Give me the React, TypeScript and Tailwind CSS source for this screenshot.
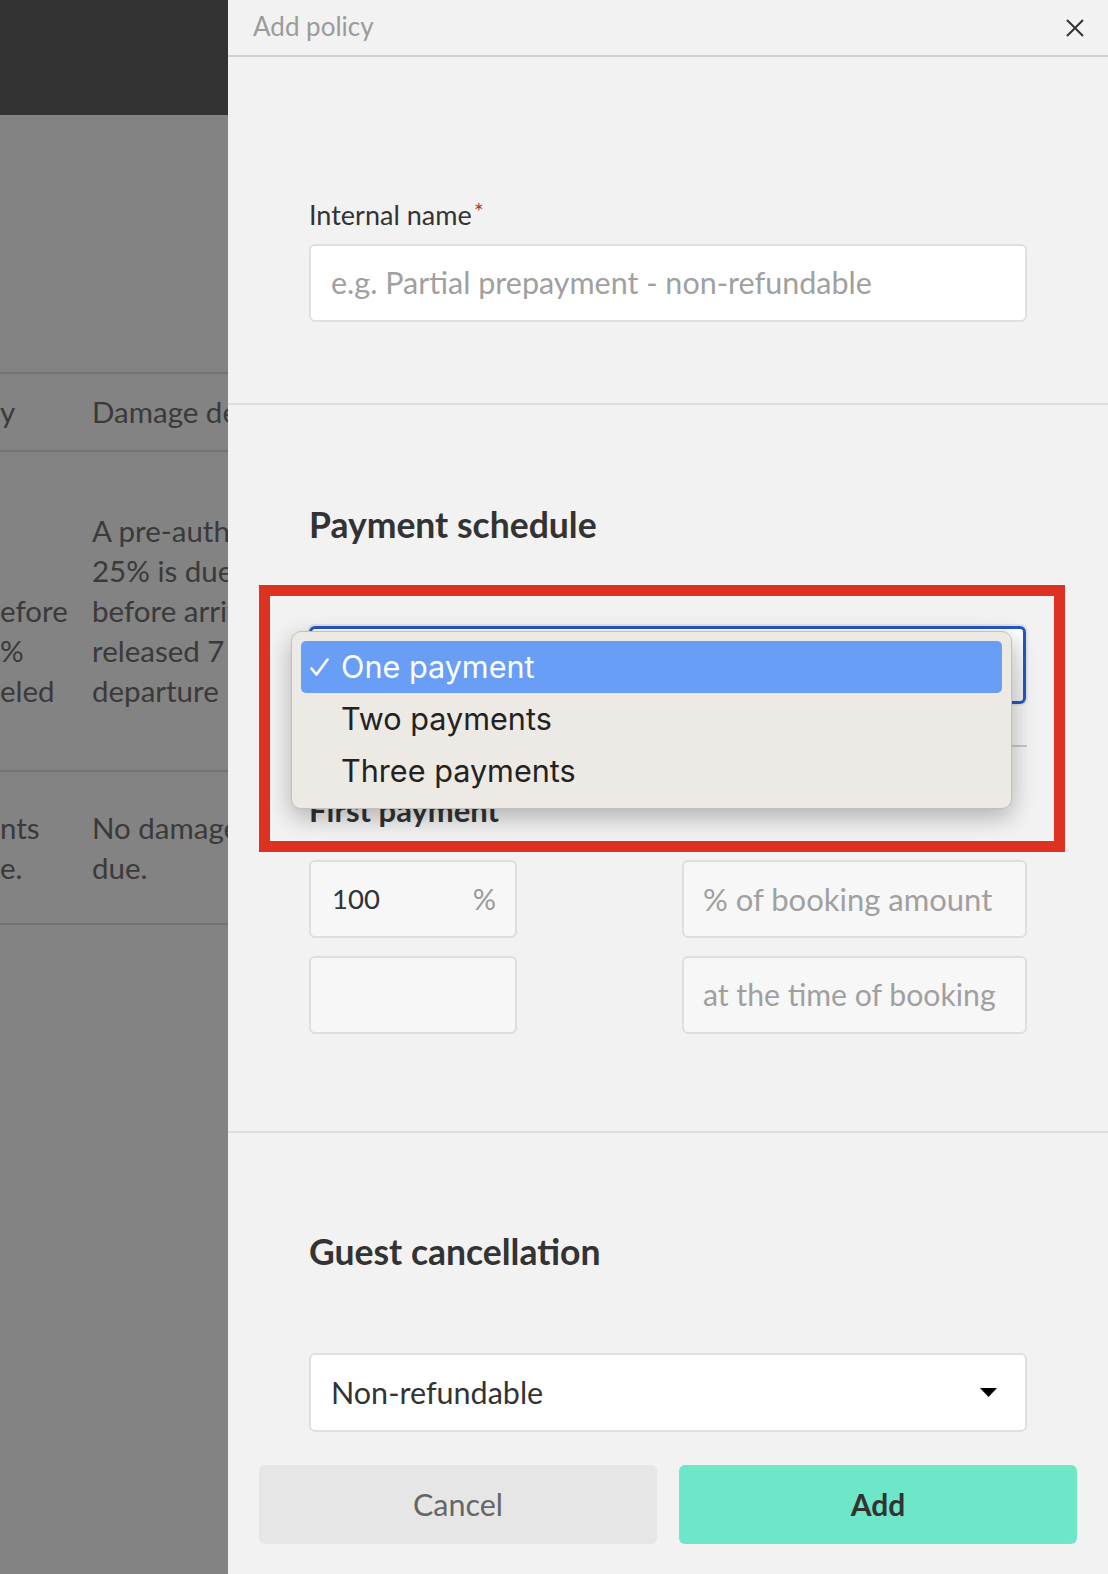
import React from "react";

function CloseIcon() {
  return (
    <svg width="18" height="18" viewBox="0 0 18 18" fill="none">
      <path d="M1 1 L17 17 M17 1 L1 17" stroke="#333" strokeWidth="2" />
    </svg>
  );
}

function Caret() {
  return (
    <svg width="17" height="9" viewBox="0 0 17 9">
      <path d="M0 0 H17 L8.5 9 Z" fill="#000" />
    </svg>
  );
}

function Check() {
  return (
    <svg width="19" height="18" viewBox="0 0 19 18" fill="none">
      <path d="M1.5 10.5 L6.5 16.5 L17.5 1.5" stroke="#fff" strokeWidth="2.6" strokeLinecap="round" strokeLinejoin="round" />
    </svg>
  );
}

function Backdrop() {
  const line = "border-t-2 border-[#737373]";
  return (
    <div className="w-[228px] shrink-0 h-full bg-[#838383] overflow-hidden flex flex-col text-[29.5px] text-[#3a3a3a]">
      <div className="h-[115px] bg-[#333333] shrink-0" />
      <div className="h-[257px] shrink-0" />
      <div className={`${line} h-[78px] flex items-center whitespace-nowrap`}>
        <div className="w-[92px] shrink-0">y</div>
        <div>Damage deposit</div>
      </div>
      <div className={`${line} h-[320px] flex items-center whitespace-nowrap leading-[40px]`}>
        <div className="w-[92px] shrink-0">
          <div>&nbsp;</div>
          <div>&nbsp;</div>
          <div>efore</div>
          <div>%</div>
          <div>eled</div>
        </div>
        <div>
          <div>A pre-authorization of</div>
          <div>25% is due 7 days</div>
          <div>before arrival and is</div>
          <div>released 7 days after</div>
          <div>departure</div>
        </div>
      </div>
      <div className={`${line} h-[153px] flex items-center whitespace-nowrap leading-[40px]`}>
        <div className="w-[92px] shrink-0">
          <div>nts</div>
          <div>e.</div>
        </div>
        <div>
          <div>No damage deposit</div>
          <div>due.</div>
        </div>
      </div>
      <div className={`${line}`} />
    </div>
  );
}

export default function App() {
  return (
    <div className="w-[1108px] h-[1574px] flex overflow-hidden font-['Lato',sans-serif]">
      <Backdrop />
      <div className="relative w-[880px] shrink-0 h-full bg-[#f2f2f2] flex flex-col">
        {/* header */}
        <div className="h-[57px] shrink-0 border-b-2 border-[#d2d2d2] flex items-center justify-between pl-[25px] pr-[24px]">
          <span className="text-[26px] text-[#9b9b9b] leading-none -mt-[4px]">Add policy</span>
          <CloseIcon />
        </div>

        {/* section 1 */}
        <div className="pt-[143px] pb-[81px] px-[81px] border-b-2 border-[#dedede]">
          <div className="text-[27px] leading-[30px] text-[#333]">
            Internal name<span className="text-[24px] leading-none text-[#c0392b] relative -top-[5px] ml-[2px]">*</span>
          </div>
          <div className="mt-[14px] h-[78px] bg-white border-2 border-[#e0e0e0] rounded-[6px] px-[20px] flex items-center">
            <span className="text-[30.5px] text-[#a0a0a0] whitespace-nowrap">e.g. Partial prepayment - non-refundable</span>
          </div>
        </div>

        {/* section 2 */}
        <div className="pt-[100px] pb-[97px] px-[81px] border-b-2 border-[#dedede]">
          <div className="text-[35.5px] font-bold leading-[40px] text-[#333] whitespace-nowrap">Payment schedule</div>
          <div className="mt-[79px] -ml-[2px] -mr-[1px] rounded-[8px] border-2 border-[#e2e2e2]">
            <div className="h-[78px] rounded-[6px] border-[3px] border-[#2457c4] bg-gradient-to-b from-white to-[#eeeeee]" />
          </div>
          <div className="mt-[39px] h-[2px] bg-[#c8c8c8]" />
          <div className="mt-[45px] text-[31px] font-bold leading-[36px] text-[#333]">First payment</div>
          <div className="mt-[32px] flex flex-col gap-[18px]">
            <div className="flex justify-between">
              <div className="w-[208px] h-[78px] bg-[#f7f7f7] border-2 border-[#dedede] rounded-[6px] pl-[21px] pr-[19px] flex items-center justify-between">
                <span className="text-[27.5px] text-[#333]">100</span>
                <span className="text-[29px] text-[#9a9a9a]">%</span>
              </div>
              <div className="w-[345px] h-[78px] bg-[#f7f7f7] border-2 border-[#dedede] rounded-[6px] px-[19px] flex items-center">
                <span className="text-[31px] text-[#a0a0a0] whitespace-nowrap">% of booking amount</span>
              </div>
            </div>
            <div className="flex justify-between">
              <div className="w-[208px] h-[78px] bg-[#f7f7f7] border-2 border-[#dedede] rounded-[6px]" />
              <div className="w-[345px] h-[78px] bg-[#f7f7f7] border-2 border-[#dedede] rounded-[6px] px-[19px] flex items-center">
                <span className="text-[30.2px] text-[#a0a0a0] whitespace-nowrap">at the time of booking</span>
              </div>
            </div>
          </div>
        </div>

        {/* section 3 */}
        <div className="pt-[99px] px-[81px]">
          <div className="text-[35.5px] font-bold leading-[40px] text-[#333] whitespace-nowrap">Guest cancellation</div>
          <div className="mt-[81px] h-[79px] bg-white border-2 border-[#e0e0e0] rounded-[6px] pl-[20px] pr-[28px] flex items-center justify-between">
            <span className="text-[30.5px] text-[#333]">Non-refundable</span>
            <Caret />
          </div>
        </div>

        {/* footer */}
        <div className="mt-[33px] px-[31px] flex gap-[22px]">
          <button className="flex-1 h-[79px] rounded-[6px] bg-[#e6e6e6] text-[30.5px] text-[#666]">Cancel</button>
          <button className="flex-1 h-[79px] rounded-[6px] bg-[#6ee6c8] text-[30px] font-bold text-[#333]">Add</button>
        </div>

        {/* dropdown menu */}
        <div className="absolute left-[63px] top-[631px] w-[721px] h-[178px] rounded-[10px] bg-[#ede9e5] border border-[#c4c0bc] shadow-[0_8px_24px_rgba(0,0,0,0.28)] p-[9px] font-['Inter',sans-serif] text-[30.6px] text-[#222]">
          <div className="h-[52px] rounded-[5px] bg-[#689ef6] text-white flex items-center">
            <span className="w-[40px] pl-[9px] flex items-center"><Check /></span>
            <span>One payment</span>
          </div>
          <div className="h-[52px] flex items-center pl-[40px]">Two payments</div>
          <div className="h-[52px] flex items-center pl-[40px]">Three payments</div>
        </div>

        {/* annotation frame */}
        <div className="absolute left-[31px] top-[585px] w-[806px] h-[267px] border-[11px] border-[#dd3222] pointer-events-none" />
      </div>
    </div>
  );
}
